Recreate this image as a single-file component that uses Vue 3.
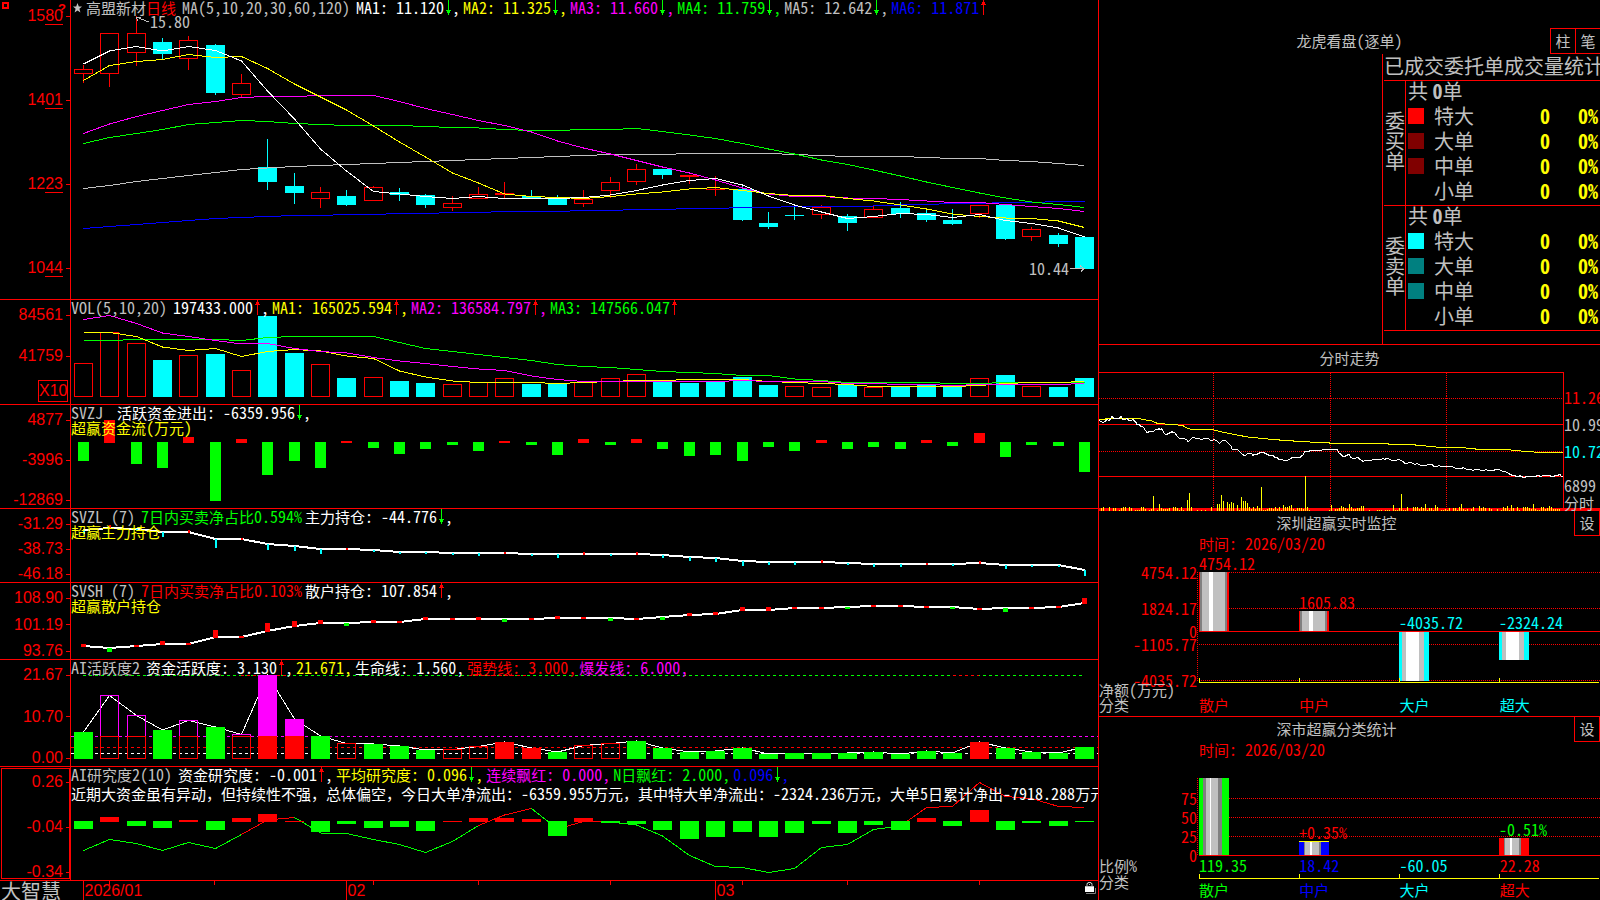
<script setup>
import { h } from 'vue'

const RED = '#ff0000'
const CYAN = '#00ffff'
const GREEN = '#00ff00'
const YELLOW = '#ffff00'
const MAGENTA = '#ff00ff'
const BLUE = '#0000ff'
const WHITE = '#ffffff'
const SILVER = '#c0c0c0'
const GRAY = '#808080'

/* Latin runs are set in half-width forms, Chinese runs in full-width ones. */
const Txt = (props) =>
  h(
    'span',
    { class: 'txt' },
    props.v.match(/[\x20-\x7e]+|[^\x20-\x7e]+/g).map((run) =>
      h('span', { class: /[\x20-\x7e]/.test(run) ? 'asc' : 'han' }, run)
    )
  )
Txt.props = ['v']

const cx = (i) => Math.round(83 + 26.34 * i) + 0.5
const line = (ys, color, width = 1, from = 0) => ({
  color,
  width,
  points: ys.map((y, k) => cx(from + k) + ',' + y).join(' '),
})
const box = (i, w, top, bottom, color) => ({ x: cx(i) - w / 2, y: top, w, h: bottom - top, color })
const frame = (i, w, top, bottom, color) => ({ x: cx(i) - w / 2 + 0.5, y: top, w: w - 1, h: bottom - top, color })

/* daily candles: kind, high, body top, body bottom, low */
const candles = [
  ['r', 65, 69.5, 73.5, 83], ['r', 33, 33.5, 73.5, 87], ['r', 16, 33.5, 52.5, 66], ['c', 38, 42, 54, 59],
  ['r', 36, 40.5, 58.5, 70], ['c', 44, 45, 93, 95], ['r', 74, 83.5, 94.5, 97], ['c', 139, 167, 182, 190],
  ['c', 173, 186, 193, 204], ['r', 187, 192.5, 198.5, 208], ['c', 190, 196, 205, 206], ['r', 186, 187.5, 200.5, 201],
  ['c', 188, 192, 195, 201], ['c', 194, 195, 205, 208], ['r', 196, 203.5, 207.5, 211], ['r', 187, 194.5, 198.5, 199],
  ['s', 182, 193, 195, 198], ['c', 190, 196, 198, 198], ['c', 195, 198, 205, 205], ['r', 190, 199.5, 203.5, 207],
  ['r', 177, 182.5, 190.5, 198], ['r', 164, 169.5, 181.5, 185], ['c', 169, 169, 175, 179], ['s', 175, 175, 177, 184],
  ['s', 176, 189, 190, 196], ['c', 184, 189, 220, 221], ['c', 212, 223, 227, 229], ['c', 207, 215, 216, 220],
  ['r', 205, 207.5, 214.5, 219], ['c', 214, 216, 223, 231], ['r', 206, 209.5, 217.5, 218], ['c', 202, 208, 214, 218],
  ['c', 209, 213, 220, 222], ['c', 209, 220, 224, 225], ['r', 205, 205.5, 213.5, 218], ['c', 205, 205, 239, 240],
  ['r', 227, 229.5, 236.5, 241], ['c', 233, 235, 244, 247], ['c', 237, 237, 269, 269],
]
const priceSolids = []
const priceFrames = []
const priceWicks = []
candles.forEach(([kind, high, top, bottom, low], i) => {
  const color = kind === 'c' ? CYAN : RED
  if (kind === 'r') priceFrames.push(frame(i, 19, top, bottom, color))
  else priceSolids.push(box(i, 19, top, bottom, color))
  if (high < top) priceWicks.push(box(i, 1, high, top, color))
  if (low > bottom) priceWicks.push(box(i, 1, bottom, low, color))
})

const ma = [
  line([228.5, 226.5, 224.5, 222.5, 220.5, 218.5, 217.5, 216.5, 215.5, 215.5, 214.5, 214.5, 213.5, 213.5, 212.5, 212.5, 211.5, 211.5, 211.5, 210.5, 210.5, 209.5, 209.5, 208.5, 208.5, 207.5, 207.5, 206.5, 206.5, 206.5, 206, 205, 204.5, 203.5, 203.5, 202.5, 202.5, 201.5, 201.5], BLUE),
  line([188.5, 185.5, 181.5, 178.5, 175.5, 172.5, 169.5, 168, 166.5, 165.5, 164.5, 163.5, 162.5, 161.5, 160.5, 159.5, 158.5, 157.5, 156.5, 155.5, 154.5, 154.5, 154.5, 153.5, 153.5, 153.5, 153.5, 154.5, 155.5, 156.5, 156.5, 156.5, 157.5, 158.5, 158.5, 160.5, 161.5, 163.5, 165.5], SILVER),
  line([143.5, 137.5, 133.5, 129.5, 124.5, 122.5, 120.5, 121.5, 123.5, 124.5, 125.5, 125.5, 125.5, 126.5, 127.5, 128, 129.5, 130.5, 130.5, 129.5, 129.5, 128.5, 131.5, 135, 138.5, 143.5, 149, 154, 160, 164.5, 170, 176, 182, 187.5, 193, 198, 202, 204.5, 207.5], GREEN),
  line([133.5, 124, 116.5, 110.5, 104.5, 101.5, 97.5, 96.5, 96.5, 95.5, 95.5, 95.5, 101.5, 108.5, 114.5, 120.5, 125.5, 132, 141, 148, 154, 160.5, 167, 173, 180, 188, 194, 196.5, 196.5, 198, 198.5, 199.5, 201, 202.5, 202.5, 204.5, 206.5, 208.5, 211.5], MAGENTA),
  line([80.5, 65.5, 61.5, 59.5, 54.5, 57.5, 56.5, 68.5, 84, 97, 110, 126, 142, 157, 173, 183, 194, 196.5, 197.5, 198.5, 196.5, 194, 192, 189, 187.5, 190.5, 193.5, 195.5, 195.5, 198.5, 201, 205, 209, 214, 216.5, 218, 218.5, 221, 227.5], YELLOW),
  line([64, 51, 46.5, 51, 46.5, 50.5, 61, 91, 119, 149, 171, 191.5, 194, 196.5, 198.5, 196.5, 198.5, 198.5, 198.5, 197.5, 195, 190.5, 185, 180.5, 178.5, 185, 196, 205, 212, 218.5, 216.5, 213.5, 214.5, 217.5, 214.5, 220.5, 223.5, 228, 237], WHITE),
]

const volume = [
  'r363.5', 'r332.5', 'r343.5', 'c360', 'r355.5', 'c354', 'r370.5', 'c316', 'c353', 'r364.5', 'c378', 'r377.5', 'c381',
  'c383', 'r384.5', 'r382.5', 'r378.5', 'c384', 'c384', 'r382.5', 'r378.5', 'r374.5', 'c382', 'c383', 'c382', 'c377',
  'c385', 'r386.5', 'r387.5', 'c385', 'r387.5', 'c387', 'c385', 'c387', 'r378.5', 'c375', 'r386.5', 'c387', 'c378',
].map((s) => [s[0], Number(s.slice(1))])
const volLines = [
  line([340.5, 340.5, 339.5, 339.5, 339.5, 339.5, 340.5, 337.5, 336.5, 336.5, 336.5, 336.5, 342.5, 348.5, 351.5, 354.5, 357.5, 360.5, 364.5, 366.5, 367.5, 369.5, 371.5, 372.5, 373.5, 375.5, 375.5, 379, 380.5, 382.5, 382.5, 382.5, 382.5, 383.5, 383.5, 382.5, 382.5, 382.5, 382.5], GREEN),
  line([332.5, 332.5, 336.5, 347, 350.5, 348.5, 356.5, 351.5, 349.5, 351, 356, 358.5, 371, 377, 381, 382.5, 382.5, 382.5, 383.5, 382.5, 381.5, 380.5, 380.5, 379.5, 379.5, 379.5, 381.5, 382.5, 383.5, 384.5, 386.5, 386.5, 386.5, 386.5, 385.5, 383.5, 382.5, 382.5, 381.5], YELLOW),
  line([319.5, 315.5, 323.5, 333, 336.5, 340.5, 344, 343.5, 348.5, 351.5, 353, 357.5, 361, 363.5, 366.5, 369, 370.5, 376, 379.5, 381.5, 381.5, 381.5, 381.5, 381.5, 381.5, 380.5, 381.5, 381.5, 381.5, 383.5, 383.5, 384.5, 384.5, 385.5, 384.5, 384.5, 384.5, 384.5, 383.5], MAGENTA),
]

const flow = [461, 420, 464, 468, 437, 501, 439, 475, 461, 468, 441, 448, 454, 449, 445, 451, 441, 445, 455, 439, 445, 439, 449, 456, 455, 461, 447, 451, 440, 449, 447, 449, 440, 446, 433, 457, 445, 446, 472]
const research = [829, 817, 826, 828, 820, 830, 818, 814, 821, 832, 824, 828, 827, 831, 821, 818, 818, 819, 836, 818, 823, 824, 830, 839, 837, 832, 837, 833, 824, 833, 825, 830, 818, 826, 810, 830, 823, 826, 822]
const signed = (ys, zero, w) =>
  ys.map((y, i) => (y <= zero ? box(i, w, y, zero + 1, RED) : box(i, w, zero, y, GREEN)))

const mainHold = [530, 528, 529, 532, 532, 539, 539, 544, 546, 549, 549, 550, 552, 552, 553, 553, 553, 554, 554, 554, 554, 554, 555, 557, 558, 561, 562, 562, 562, 563, 564, 564, 564, 564, 563, 565, 565, 565, 570]
const mainTicks = [3, -3, 1, 4, -2, 8, -1, 5, 4, 4, -1, 1, 1, 1, 1, 2, -1, 1, 3, -2, 1, -2, 2, 3, 3, 4, 2, 2, -2, 1, 2, 2, -1, 1, -2, 3, 1, 1, 5]
const smallHold = [646, 648, 646, 644, 644, 637, 637, 631, 626, 623, 623, 622, 622, 619, 619, 619, 619, 619, 618, 618, 618, 619, 617, 615, 614, 610, 610, 608, 608, 607, 606, 606, 607, 607, 609, 608, 608, 607, 603]
const smallTicks = [-2, 3, -1, -3, -1, -7, -1, -8, -5, -3, 2, -2, -1, -2, -1, -2, 2, -1, -2, -1, 2, -1, 2, -2, -2, -3, -3, -1, -1, 1, -1, -1, -1, 1, -1, 3, -1, -1, -5]
const ticks = (ys, ds, w, up, down) =>
  ds.map((d, i) => (d < 0 ? box(i, w, ys[i] + d, ys[i] + 1, up) : box(i, w, ys[i], ys[i] + d + 1, down)))

/* g: green bar, m: outlined, M: filled magenta over red, r: outlined red, R: filled red */
const activity = [
  'g732', 'm695.5', 'm715.5', 'g730', 'm720.5', 'g727', 'm734.5', 'M675', 'M719', 'g736', 'r743.5', 'g744', 'g746',
  'g750', 'r749.5', 'r746.5', 'R742', 'R748', 'g752', 'r745.5', 'r743.5', 'g741', 'g748', 'g752', 'g751', 'g748', 'g754',
  'g753', 'g753', 'g753', 'g752', 'g754', 'g751', 'g753', 'R742', 'g748', 'g752', 'g753', 'g747',
].map((s) => [s[0], Number(s.slice(1))])
const actSolids = []
const actFrames = []
activity.forEach(([kind, top], i) => {
  if (kind === 'g') actSolids.push(box(i, 19, top, 759, GREEN))
  if (kind === 'R') actSolids.push(box(i, 19, top, 759, RED))
  if (kind === 'M') actSolids.push(box(i, 19, top, 736, MAGENTA), box(i, 19, 736, 759, RED))
  if (kind === 'r') actFrames.push(frame(i, 19, top, 758.5, RED))
  if (kind === 'm') actFrames.push(frame(i, 19, top, 736.5, MAGENTA), frame(i, 19, 736.5, 758.5, RED))
})

const research2 = [850.5, 839.5, 843.5, 850.5, 842.5, 848.5, 834.5, 820, 817.5, 833, 833.5, 839.5, 844.5, 852.5, 841.5, 825.5, 815, 808.5, 829, 821.5, 822, 825, 836, 855.5, 866.5, 867.5, 872.5, 868.5, 847.5, 844.5, 829.5, 826, 807.5, 806.5, 782.5, 796.5, 798.5, 806.5, 807.5]
const part = (a, b, color) => line(research2.slice(a, b + 1), color, 1, a)

const panels = [
  {
    id: 'price', y: 0, h: 299, marks: true,
    axis: ['1580', '1401', '1223', '1044'],
    title: null,
    items: [
      { t: 'MA1: 11.120', c: WHITE, a: 'down', e: ',' },
      { t: 'MA2: 11.325', c: YELLOW, a: 'down', e: ',' },
      { t: 'MA3: 11.660', c: MAGENTA, a: 'down', e: ',' },
      { t: 'MA4: 11.759', c: GREEN, a: 'down', e: ',' },
      { t: 'MA5: 12.642', c: SILVER, a: 'down', e: ',' },
      { t: 'MA6: 11.871', c: BLUE, a: 'up' },
    ],
    solids: [...priceSolids, ...priceWicks], frames: priceFrames, front: ma,
  },
  {
    id: 'vol', y: 300, h: 104, axis: ['84561', '41759'], unit: 'X10',
    title: 'VOL(5,10,20)',
    items: [
      { t: '197433.000', c: WHITE, a: 'up', e: ',' },
      { t: 'MA1: 165025.594', c: YELLOW, a: 'up', e: ',' },
      { t: 'MA2: 136584.797', c: MAGENTA, a: 'up', e: ',' },
      { t: 'MA3: 147566.047', c: GREEN, a: 'up' },
    ],
    solids: volume.map(([k, y], i) => (k === 'c' ? box(i, 19, y, 397, CYAN) : null)).filter(Boolean),
    frames: volume.map(([k, y], i) => (k === 'r' ? frame(i, 19, y, 396.5, RED) : null)).filter(Boolean),
    front: volLines,
  },
  {
    id: 'flow', y: 405, h: 103, axis: ['4877', '-3996', '-12869'],
    title: 'SVZJ ', sub: '超赢资金流(万元)',
    items: [{ t: '活跃资金进出: -6359.956', c: WHITE, a: 'down', e: ',' }],
    solids: signed(flow, 442, 11),
  },
  {
    id: 'main', y: 509, h: 73, axis: ['-31.29', '-38.73', '-46.18'],
    title: 'SVZL (7)', sub: '超赢主力持仓',
    items: [
      { t: '7日内买卖净占比0.594%', c: GREEN },
      { t: '主力持仓: -44.776', c: WHITE, a: 'down', e: ',' },
    ],
    back: [line(mainHold, WHITE, 2)],
    solids: ticks(mainHold, mainTicks, 2, RED, CYAN),
  },
  {
    id: 'small', y: 583, h: 76, axis: ['108.90', '101.19', '93.76'],
    title: 'SVSH (7)', sub: '超赢散户持仓',
    items: [
      { t: '7日内买卖净占比0.103%', c: RED },
      { t: '散户持仓: 107.854', c: WHITE, a: 'up', e: ',' },
    ],
    back: [line(smallHold, WHITE, 2)],
    solids: ticks(smallHold, smallTicks, 5, RED, GREEN),
  },
  {
    id: 'active', y: 660, h: 106, axis: ['21.67', '10.70', '0.00'],
    title: 'AI活跃度2',
    items: [
      { t: '资金活跃度: 3.130', c: WHITE, a: 'up', e: ',' },
      { t: '21.671,', c: YELLOW },
      { t: '生命线: 1.560,', c: WHITE },
      { t: '强势线: 3.000,', c: RED },
      { t: '爆发线: 6.000,', c: MAGENTA },
    ],
    dashes: [
      { x1: 83, x2: 1085, y: 675.5, color: GREEN },
      { x1: 241, x2: 289, y: 675.5, color: RED },
      { x1: 475, x2: 529, y: 675.5, color: RED },
      { x1: 953, x2: 979, y: 675.5, color: RED },
      { x1: 71, x2: 1098, y: 736.5, color: MAGENTA },
      { x1: 71, x2: 1098, y: 747.5, color: RED },
      { x1: 71, x2: 1098, y: 753.5, color: WHITE },
    ],
    back: [line(activity.map((a) => a[1]), WHITE)],
    solids: actSolids, frames: actFrames,
  },
  {
    id: 'research', y: 767, h: 113, axis: ['0.26', '-0.04', '-0.34'],
    title: 'AI研究度2(10)',
    note: '近期大资金虽有异动，但持续性不强，总体偏空，今日大单净流出：-6359.955万元，其中特大单净流出：-2324.236万元，大单5日累计净出-7918.288万元',
    items: [
      { t: '资金研究度: -0.001', c: WHITE, a: 'up', e: ',' },
      { t: '平均研究度: 0.096', c: YELLOW, a: 'down', e: ',' },
      { t: '连续飘红: 0.000,', c: MAGENTA },
      { t: 'N日飘红: 2.000,', c: GREEN },
      { t: '0.096', c: BLUE, a: 'down', e: ',' },
    ],
    back: [
      part(0, 6, GREEN), part(6, 8, RED), part(8, 15, GREEN), part(15, 17, RED),
      part(17, 18, GREEN), part(18, 20, RED), part(20, 31, GREEN), part(31, 38, RED),
    ],
    solids: signed(research, 821, 19),
  },
]

const dayTicks = [109.5, 214.5, 373.5, 478.5, 610.5, 742.5, 847.5, 979.5]
const months = [
  { x: 83.5, name: '2026/01' },
  { x: 346.5, name: '02' },
  { x: 715.5, name: '03' },
]
const pct = (v, from, size) => ((v - from) / size) * 100 + '%'

const orders = [
  { side: '委买单', rows: [['特大', RED], ['大单', '#800000'], ['中单', '#800000'], ['小单', '']] },
  { side: '委卖单', rows: [['特大', CYAN], ['大单', '#008080'], ['中单', '#008080'], ['小单', '']] },
]

/* intraday price and average */
const dayAnchors = [
  [1099, 419], [1105, 420], [1110, 418], [1112, 415], [1114, 417], [1119, 417], [1121, 415], [1125, 418], [1134, 419], [1137, 423],
  [1143, 425], [1147, 431], [1151, 430], [1157, 428], [1162, 427], [1166, 433], [1170, 431], [1175, 431], [1178, 435], [1183, 437],
  [1188, 440], [1193, 436], [1200, 437], [1207, 437], [1213, 438], [1220, 441], [1224, 439], [1229, 442], [1232, 447], [1238, 448],
  [1244, 453], [1249, 451], [1257, 452], [1261, 450], [1267, 452], [1273, 453], [1280, 457], [1287, 458], [1292, 455], [1300, 455],
  [1303, 453], [1305, 449], [1320, 448], [1337, 447], [1339, 451], [1345, 454], [1349, 452], [1353, 456], [1358, 455], [1363, 459],
  [1373, 457], [1386, 456], [1394, 458], [1399, 457], [1405, 461], [1417, 461], [1422, 463], [1428, 462], [1437, 464], [1450, 464],
  [1458, 466], [1463, 465], [1467, 467], [1482, 468], [1495, 467], [1505, 469], [1511, 472], [1518, 474], [1533, 474], [1542, 473],
  [1553, 474], [1560, 472], [1563, 474],
]
const wobble = (n) => Math.abs(Math.sin(n * 12.9898) * 43758.5453) % 1
const dayLine = []
dayAnchors.forEach(([x, y], i) => {
  dayLine.push(x + ',' + (y + 0.5))
  const next = dayAnchors[i + 1]
  if (!next) return
  for (let k = x + 2; k < next[0]; k += 2) {
    const mid = y + ((next[1] - y) * (k - x)) / (next[0] - x)
    dayLine.push(k + ',' + (Math.round(mid + (wobble(k) - 0.5) * (k < 1260 ? 2.4 : 1.2)) + 0.5))
  }
})
const avgLine = '1099,418.5 1112,417.5 1138,417.5 1152,420 1158,422.5 1175,423.5 1183,424.5 1188,427.5 1196,428.5 1213,428.5 1223,431 1247,435.5 1272,438 1300,440 1330,441.5 1353,441.5 1390,442.5 1417,443.5 1437,445.5 1457,445.5 1477,447.5 1502,447.5 1523,449.5 1537,450.5 1563,450.5'
const spikes = {
  1120: 6, 1141: 5, 1153: 16, 1159: 8, 1187: 12, 1189: 19, 1217: 8, 1219: 8, 1221: 17, 1223: 11, 1227: 10, 1229: 8, 1231: 10,
  1233: 9, 1237: 7, 1241: 15, 1243: 11, 1245: 11, 1247: 9, 1257: 6, 1261: 24, 1283: 7, 1289: 6, 1291: 7, 1305: 35, 1331: 7,
  1341: 6, 1349: 8, 1361: 6, 1363: 6, 1393: 7, 1401: 18, 1425: 8, 1435: 7, 1461: 8, 1479: 6, 1507: 6, 1511: 7, 1533: 8, 1549: 6,
}
const dayVolume = []
for (let x = 1101; x < 1560; x += 2) {
  const quiet = (x > 1192 && x < 1210) || (x > 1318 && x < 1328) || (x > 1366 && x < 1398)
  const tall = spikes[x] || 1 + Math.floor(wobble(x) * (quiet ? 1.6 : 5))
  dayVolume.push({ x, y: 509 - tall, h: tall })
}

const stripes = (x, y, hgt, edges) =>
  edges.slice(1).map(([to, color], k) => ({ x: x + edges[k][0], y, w: to - edges[k][0], h: hgt, color }))
const tube = (c, a) => [[0], [a[0], c], [a[1], GRAY], [a[2], SILVER], [a[3], WHITE], [a[4], SILVER], [a[5], GRAY], [30, c]]
const glass = (c) => [[0], [3, c], [7, SILVER], [20, WHITE], [25, SILVER], [30, c]]

const netRows = [
  { y: 572, t: '4754.12' }, { y: 608, t: '1824.17' }, { y: 631, t: '0' }, { y: 644, t: '-1105.77' }, { y: 680, t: '-4035.72' },
]
const netBars = [
  ...stripes(1199, 572, 59, tube(RED, [1, 3, 10, 14, 26, 28])),
  ...stripes(1299, 611, 20, tube(RED, [1, 3, 10, 14, 26, 28])),
  ...stripes(1399, 632, 49, glass(CYAN)),
  ...stripes(1499, 632, 28, glass(CYAN)),
]
const netTags = [
  { x: 1199, y: 563, t: '4754.12', c: RED }, { x: 1299, y: 602, t: '1605.83', c: RED },
  { x: 1399, y: 622, t: '-4035.72', c: CYAN }, { x: 1499, y: 622, t: '-2324.24', c: CYAN },
]
const netCats = [{ t: '散户', c: RED }, { t: '中户', c: RED }, { t: '大户', c: CYAN }, { t: '超大', c: CYAN }]

const ratioRows = [{ y: 798, t: '75' }, { y: 817, t: '50' }, { y: 836, t: '25' }, { y: 855, t: '0' }]
const ratioBars = [
  ...stripes(1199, 778, 77, tube(GREEN, [4, 7, 11, 12, 19, 23])),
  ...stripes(1299, 842, 13, tube(BLUE, [5, 6, 11, 13, 20, 22])),
  { x: 1299, y: 841, w: 30, h: 1, color: YELLOW },
  ...stripes(1499, 838, 17, tube(RED, [5, 6, 11, 13, 20, 22])),
]
const ratioTags = [{ x: 1299, y: 832, t: '+0.35%', c: RED }, { x: 1499, y: 829, t: '-0.51%', c: GREEN }]
const ratioCats = [
  { t: '散户', v: '119.35', c: GREEN }, { t: '中户', v: '18.42', c: BLUE }, { t: '大户', v: '-60.05', c: CYAN }, { t: '超大', v: '22.28', c: RED },
]
</script>

<template>
  <main class="desk">
    <div class="charts">
      <section v-for="p in panels" :key="p.id" class="panel" :class="p.id">
        <div class="axis">
          <div v-for="a in p.axis" :key="a" class="mark">
            <span v-if="p.marks">{{ a.slice(0, 2) }}<span class="cents">{{ a.slice(2) }}</span></span>
            <span v-else>{{ a }}</span>
            <i class="tick"></i>
          </div>
          <div v-if="p.unit" class="unit">{{ p.unit }}</div>
          <template v-if="p.marks">
            <button class="pin" aria-label="窗口"></button>
            <button class="help">?</button>
          </template>
        </div>
        <div class="plot">
          <svg class="draw" :viewBox="`71 ${p.y} 1027 ${p.h}`" preserveAspectRatio="none" aria-hidden="true">
            <line v-for="(d, k) in p.dashes" :key="'d' + k" :x1="d.x1" :x2="d.x2" :y1="d.y" :y2="d.y" :stroke="d.color" stroke-dasharray="3 3" />
            <polyline v-for="(l, k) in p.back" :key="'b' + k" :points="l.points" :stroke="l.color" :stroke-width="l.width" fill="none" />
            <rect v-for="(r, k) in p.frames" :key="'f' + k" :x="r.x" :y="r.y" :width="r.w" :height="r.h" :stroke="r.color" fill="none" />
            <rect v-for="(r, k) in p.solids" :key="'s' + k" :x="r.x" :y="r.y" :width="r.w" :height="r.h" :fill="r.color" />
            <polyline v-for="(l, k) in p.front" :key="'l' + k" :points="l.points" :stroke="l.color" :stroke-width="l.width" fill="none" />
            <g v-if="p.marks" :stroke="SILVER" fill="none">
              <path d="M136 17L149 22M136 17l5 0M136 17l2 4" />
              <path d="M1070 268.5H1084M1080 265.5l4 3l-3 3" />
            </g>
          </svg>
          <div class="legend">
            <span v-if="p.marks" class="title stock">
              <svg width="9" height="10" viewBox="0 0 9 10"><path d="M4.5 0L5.8 3.5H9L6.4 5.8L7.4 9.6L4.5 7.4L1.6 9.6L2.6 5.8L0 3.5H3.2Z" :fill="SILVER" /></svg>
              <Txt v="高盟新材" />
              <Txt class="red" v="日线" />
              <Txt class="params" v="MA(5,10,20,30,60,120)" />
            </span>
            <Txt v-else class="title" :v="p.title" />
            <span v-for="(it, k) in p.items" :key="k" class="item" :style="{ color: it.c }">
              <Txt :v="it.t" />
              <svg v-if="it.a" class="arrow" width="8" height="15" viewBox="0 0 8 15">
                <path v-if="it.a === 'down'" d="M4 0h1v15h-1zM2 10h5v1h-1v2h-3v-2h-1z" :fill="GREEN" />
                <path v-else d="M4 0h1v15h-1zM3 2h3v2h1v1h-5v-1h1z" :fill="RED" />
              </svg>
              <Txt v-if="it.e" :v="it.e" />
            </span>
          </div>
          <div v-if="p.sub" class="sub"><Txt :v="p.sub" /></div>
          <p v-if="p.note" class="note"><Txt :v="p.note" /></p>
          <template v-if="p.marks">
            <span class="tag" :style="{ left: pct(150, 71, 1027), top: pct(21, 0, 299) }"><Txt v="15.80" /></span>
            <span class="tag" :style="{ left: pct(1029, 71, 1027), top: pct(268, 0, 299) }"><Txt v="10.44" /></span>
          </template>
        </div>
      </section>
      <footer class="dates">
        <div class="brand">大智慧</div>
        <div class="plot">
          <svg class="draw" viewBox="71 881 1027 19" preserveAspectRatio="none" aria-hidden="true">
            <path v-for="x in dayTicks" :key="x" :d="`M${x} 881v4`" :stroke="RED" />
            <path v-for="m in months" :key="m.x" :d="`M${m.x} 881v19`" :stroke="RED" />
          </svg>
          <span v-for="m in months" :key="m.name" class="month" :style="{ left: pct(m.x, 71, 1027) }">{{ m.name }}</span>
          <svg class="lock" width="11" height="12" viewBox="0 0 11 12">
            <path d="M2 4V1.500H3V.5H6V1.500H7V4M4 2.500h1" fill="none" :stroke="SILVER" />
            <path d="M1 11.500H10.500V6" fill="none" :stroke="GRAY" />
            <rect x="0" y="5" width="9" height="5" :fill="WHITE" />
            <path d="M0 4.500h9" :stroke="SILVER" />
          </svg>
        </div>
      </footer>
    </div>

    <aside class="side">
      <section class="block watch">
        <header class="bar">
          <h2><Txt v="龙虎看盘(逐单)" /></h2>
          <div class="tools">
            <button class="tool"><Txt v="柱" /></button>
            <button class="tool"><Txt v="笔" /></button>
          </div>
        </header>
        <div class="tally">
          <table>
            <caption>已成交委托单成交量统计</caption>
            <tbody v-for="g in orders" :key="g.side">
              <tr>
                <th class="party" rowspan="5" scope="rowgroup">{{ g.side }}</th>
                <td class="sum" colspan="4">共 <b>0</b>单</td>
              </tr>
              <tr v-for="(r, k) in g.rows" :key="k">
                <td class="key"><i class="chip" :style="{ background: r[1] }"></i></td>
                <th class="size" scope="row">{{ r[0] }}</th>
                <td class="num">0</td>
                <td class="num share">0%</td>
              </tr>
            </tbody>
          </table>
        </div>
      </section>

      <section class="block intraday">
        <h2><Txt v="分时走势" /></h2>
        <div class="day">
          <div class="plot framed">
            <svg class="draw" viewBox="1099 373 464 135" preserveAspectRatio="none" aria-hidden="true">
              <g :stroke="RED">
                <path d="M1099 397.500H1563M1099 449.500H1563M1213.500 373V508M1330.500 373V508M1446.500 373V508" stroke-dasharray="1 1" />
                <path d="M1099 423.500H1563M1099 474.500H1563" />
              </g>
              <rect v-for="v in dayVolume" :key="v.x" :x="v.x" :y="v.y" width="1" :height="v.h" :fill="YELLOW" />
              <polyline :points="avgLine" :stroke="YELLOW" fill="none" />
              <polyline :points="dayLine.join(' ')" :stroke="WHITE" fill="none" />
            </svg>
          </div>
          <div class="levels">
            <span class="red"><Txt v="11.26" /></span>
            <span><Txt v="10.99" /></span>
            <span class="cyan"><Txt v="10.72" /></span>
            <span class="low"><Txt v="6899" /></span>
            <span class="low"><Txt v="分时" /></span>
          </div>
        </div>
      </section>

      <section class="block net">
        <header class="bar">
          <h2><Txt v="深圳超赢实时监控" /></h2>
          <div class="tools"><button class="tool"><Txt v="设" /></button></div>
        </header>
        <div class="time"><Txt v="时间: 2026/03/20" /></div>
        <div class="graph">
          <div class="scale">
            <span v-for="r in netRows" :key="r.t" class="step" :style="{ top: pct(r.y, 553, 144) }"><Txt :v="r.t" /></span>
            <div class="caption"><Txt v="净额(万元)" /></div>
          </div>
          <div class="plot">
            <svg class="draw" viewBox="1197 553 403 144" preserveAspectRatio="none" aria-hidden="true">
              <g :stroke="RED">
                <path d="M1199 572.500H1600M1199 608.500H1600M1199 644.500H1600M1199 680.500H1600M1197.500 572V681" stroke-dasharray="1 1" />
                <path d="M1199 631.500H1600" />
              </g>
              <rect v-for="(b, k) in netBars" :key="k" :x="b.x" :y="b.y" :width="b.w" :height="b.h" :fill="b.color" />
              <path d="M1199.500 678v4.500H1599M1299.500 678v4M1399.500 678v4M1499.500 678v4" :stroke="YELLOW" fill="none" />
            </svg>
            <span v-for="t in netTags" :key="t.t" class="tag" :style="{ left: pct(t.x, 1197, 403), top: pct(t.y, 553, 144), color: t.c }"><Txt :v="t.t" /></span>
          </div>
        </div>
        <div class="cats">
          <Txt class="caption" v="分类" />
          <div class="four"><span v-for="c in netCats" :key="c.t" :style="{ color: c.c }"><Txt :v="c.t" /></span></div>
        </div>
      </section>

      <section class="block ratio">
        <header class="bar">
          <h2><Txt v="深市超赢分类统计" /></h2>
          <div class="tools"><button class="tool"><Txt v="设" /></button></div>
        </header>
        <div class="time"><Txt v="时间: 2026/03/20" /></div>
        <div class="graph">
          <div class="scale">
            <span v-for="r in ratioRows" :key="r.t" class="step" :style="{ top: pct(r.y, 759, 98) }"><Txt :v="r.t" /></span>
          </div>
          <div class="plot">
            <svg class="draw" viewBox="1197 759 403 98" preserveAspectRatio="none" aria-hidden="true">
              <g :stroke="RED">
                <path d="M1199 798.500H1600M1199 817.500H1600M1199 836.500H1600M1197.500 778V855" stroke-dasharray="1 1" />
                <path d="M1199 855.500H1600" />
              </g>
              <rect v-for="(b, k) in ratioBars" :key="k" :x="b.x" :y="b.y" :width="b.w" :height="b.h" :fill="b.color" />
            </svg>
            <span v-for="t in ratioTags" :key="t.t" class="tag" :style="{ left: pct(t.x, 1197, 403), top: pct(t.y, 759, 98), color: t.c }"><Txt :v="t.t" /></span>
          </div>
        </div>
        <div class="cats tall">
          <div class="captions">
            <Txt v="比例%" />
            <Txt v="分类" />
          </div>
          <div class="stack">
            <div class="four"><span v-for="c in ratioCats" :key="c.v" :style="{ color: c.c }"><Txt :v="c.v" /></span></div>
            <svg class="rule" viewBox="1199 873 401 6" preserveAspectRatio="none" aria-hidden="true">
              <path d="M1199.500 874v4.500H1599M1299.500 874v4M1399.500 874v4M1499.500 874v4" :stroke="YELLOW" fill="none" />
            </svg>
            <div class="four names"><span v-for="c in ratioCats" :key="c.t" :style="{ color: c.c }"><Txt :v="c.t" /></span></div>
          </div>
        </div>
      </section>
    </aside>
  </main>
</template>

<style>
body {
  background: #000;
}
.txt {
  white-space: pre;
}
.txt .han {
  font-size: 15px;
}
.txt .asc {
  font-size: 16px;
  font-feature-settings: "hwid" 1;
}
</style>

<style scoped>
.desk {
  display: grid;
  grid-template-columns: minmax(0, 1098fr) minmax(0, 502fr);
  grid-template-rows: minmax(0, 1fr);
  height: 100vh;
  min-height: 800px;
  overflow: hidden;
  background: #000;
  color: #c0c0c0;
  font-family: "Noto Sans CJK SC", sans-serif;
  font-weight: 400;
  font-size: 15px;
  line-height: 15px;
}
.charts {
  display: grid;
  grid-template-rows:
    minmax(0, 300fr) minmax(0, 105fr) minmax(0, 104fr) minmax(0, 74fr)
    minmax(0, 77fr) minmax(0, 107fr) minmax(0, 114fr) minmax(0, 19fr);
  min-width: 0;
}
.panel {
  display: grid;
  grid-template-columns: 71px minmax(0, 1fr);
  grid-template-rows: minmax(0, 1fr);
  border-bottom: 1px solid #f00;
}
.axis {
  position: relative;
  display: flex;
  flex-direction: column;
  justify-content: space-between;
  padding-top: 7px;
  border-right: 1px solid #f00;
  color: #f00;
  font-family: "Liberation Sans", sans-serif;
  font-size: 16px;
  line-height: 16px;
}
.price .axis {
  padding: 8px 0 23px;
}
.vol .axis {
  justify-content: flex-start;
}
.vol .mark + .mark {
  margin-top: 25px;
}
.research .axis {
  outline: 1px solid #f00;
  outline-offset: -2px;
}
.mark {
  display: flex;
  justify-content: flex-end;
  align-items: center;
  gap: 3px;
}
.tick {
  width: 4px;
  height: 1px;
  background: #f00;
}
.cents {
  box-shadow: 0 1px 0 #f00;
}
.unit {
  align-self: flex-end;
  margin: auto 2px 2px 0;
  padding: 2px 0;
  width: 28px;
  border: 1px solid #f00;
  text-align: center;
}
.pin,
.help {
  position: absolute;
  padding: 0;
  border: 0;
  background: none;
  color: #f00;
}
.pin {
  left: 2px;
  top: 2px;
  width: 7px;
  height: 7px;
  border: 2px solid #f00;
}
.help {
  right: 4px;
  top: 2px;
  font: bold 13px/13px "Liberation Sans", sans-serif;
}
.plot {
  position: relative;
  min-width: 0;
}
.draw {
  position: absolute;
  inset: 0;
  width: 100%;
  height: 100%;
  shape-rendering: crispEdges;
}
.legend {
  position: relative;
  display: flex;
  gap: 3px;
  height: 15px;
  white-space: nowrap;
}
.title {
  margin-right: 3px;
}
.stock {
  display: flex;
  align-items: center;
  padding-left: 2px;
}
.stock svg {
  margin-right: 4px;
}
.stock .params {
  margin-left: 6px;
}
.item {
  display: flex;
}
.sub {
  position: relative;
  color: #ff0;
}
.note {
  position: relative;
  margin: 0;
  overflow-x: clip;
  line-height: 22px;
  color: #fff;
  white-space: nowrap;
}
.tag {
  position: absolute;
  transform: translateY(-50%);
  white-space: nowrap;
}
.dates {
  display: grid;
  grid-template-columns: 71px minmax(0, 1fr);
  line-height: 19px;
}
.brand {
  padding-left: 1px;
  font-size: 20px;
}
.month {
  position: absolute;
  padding-left: 1px;
  color: #f00;
  font-family: "Liberation Sans", sans-serif;
  font-size: 16px;
}
.lock {
  position: absolute;
  right: 2px;
  top: 1px;
}
.side {
  display: grid;
  grid-template-rows: minmax(0, 345fr) minmax(0, 166fr) minmax(0, 206fr) minmax(0, 183fr);
  min-width: 0;
  overflow: hidden;
  border-left: 1px solid #f00;
}
.block {
  display: flex;
  flex-direction: column;
  min-width: 0;
  border-bottom: 1px solid #f00;
}
.intraday {
  border-bottom-width: 3px;
}
.ratio {
  border-bottom: 0;
}
h2 {
  margin: 0;
  font-size: 15px;
  font-weight: 400;
  text-align: center;
}
.bar {
  display: grid;
  grid-template-columns: 1fr auto;
  align-items: center;
}
.bar h2 {
  padding-bottom: 2px;
}
.watch .bar {
  grid-template-columns: 1fr auto 1fr;
  margin-top: 28px;
}
.watch h2 {
  grid-column: 2;
}
.tools {
  display: flex;
  justify-self: end;
}
.tool {
  width: 26px;
  height: 25px;
  padding: 0 0 2px;
  border: 1px solid #f00;
  border-top: 0;
  background: #000;
  color: #c0c0c0;
  font: inherit;
}
.watch .tool {
  width: 25px;
  height: 26px;
  border-top: 1px solid #f00;
  border-right: 0;
}
.tally {
  flex: 1;
  margin-left: 56.5%;
  border-left: 1px solid #f00;
  padding-left: 1px;
  overflow: hidden;
}
table {
  width: 100%;
  border-collapse: collapse;
  font-size: 20px;
  line-height: 20px;
}
caption {
  width: 0;
  height: 26px;
  line-height: 24px;
  text-align: left;
  white-space: nowrap;
}
tbody {
  border-top: 1px solid #f00;
  border-bottom: 1px solid #f00;
}
tr {
  height: 25px;
}
th,
td {
  padding: 0 0 4px;
  font-weight: 400;
  text-align: left;
}
.party {
  width: 20px;
  padding-left: 1px;
  border-right: 1px solid #f00;
  word-break: break-all;
}
.sum {
  padding-left: 2px;
}
.sum b,
.num {
  font-weight: 700;
  font-feature-settings: "hwid" 1;
}
.key {
  width: 26px;
  padding-left: 2px;
}
.chip {
  display: block;
  width: 16px;
  height: 16px;
}
.size {
  width: 44px;
}
.num {
  color: #ff0;
  text-align: right;
}
.share {
  width: 48px;
  padding-right: 2px;
}
.intraday h2 {
  flex: none;
  height: 27px;
  line-height: 25px;
}
.day {
  flex: 1;
  display: grid;
  grid-template-columns: minmax(0, 1fr) 36px;
  grid-template-rows: minmax(0, 1fr);
}
.framed {
  border: solid #f00;
  border-width: 1px 1px 0 0;
}
.levels {
  display: flex;
  flex-direction: column;
  padding-top: 12px;
  line-height: 26px;
}
.levels .low {
  line-height: 17px;
}
.levels .cyan {
  margin-bottom: 12px;
}
.red {
  color: #f00;
}
.cyan {
  color: #0ff;
}
.time {
  padding: 0 0 2px 100px;
  color: #f00;
}
.graph {
  flex: 1;
  display: grid;
  grid-template-columns: 98px minmax(0, 1fr);
}
.scale {
  position: relative;
  display: flex;
  align-items: flex-end;
}
.step {
  position: absolute;
  right: 0;
  transform: translateY(-50%);
  color: #f00;
}
.scale .caption {
  position: relative;
}
.cats {
  display: grid;
  grid-template-columns: 100px minmax(0, 1fr);
  line-height: 16px;
}
.net .cats {
  margin-bottom: 3px;
}
.four {
  display: grid;
  grid-template-columns: repeat(4, 1fr);
  height: 16px;
}
.captions {
  display: flex;
  flex-direction: column;
}
.stack {
  display: flex;
  flex-direction: column;
}
.rule {
  display: block;
  width: 100%;
  height: 6px;
  shape-rendering: crispEdges;
}
.names {
  height: 21px;
  line-height: 22px;
}
</style>
